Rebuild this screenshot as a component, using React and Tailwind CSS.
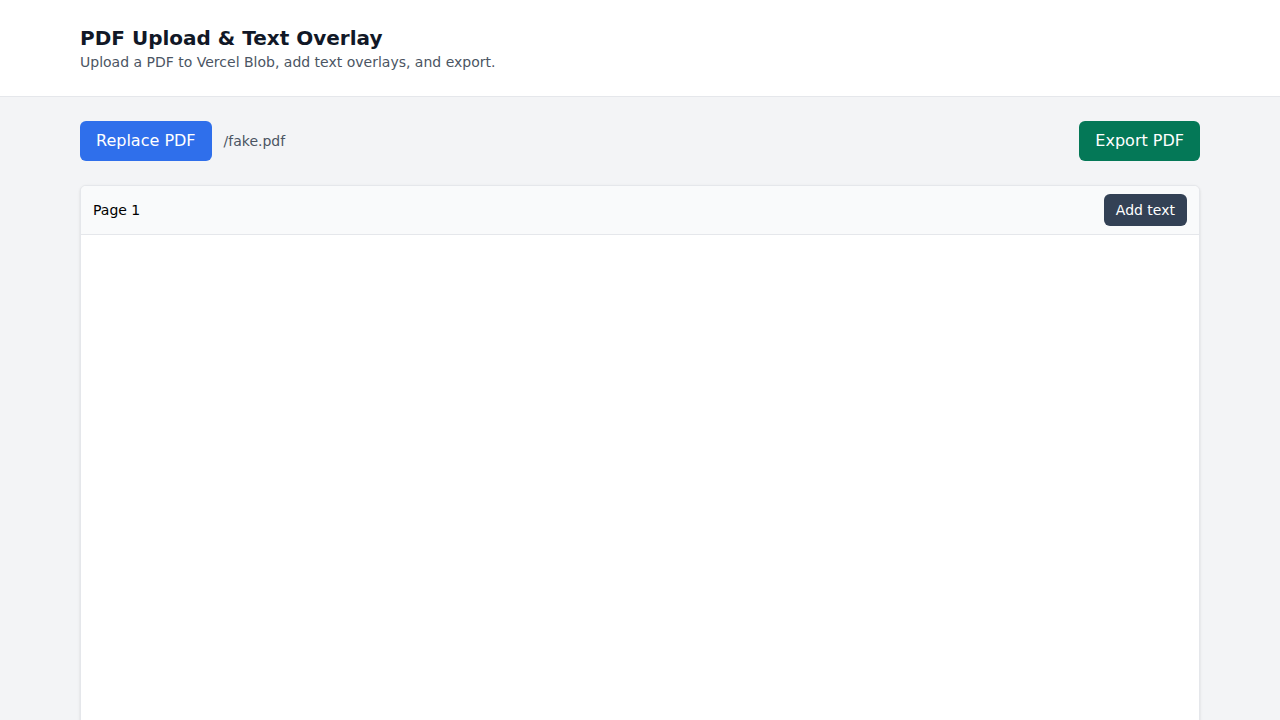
import React from "react";

const App = () => {
  return (
    <div className="min-h-screen bg-[#f3f4f6] font-['DejaVu_Sans',sans-serif] text-gray-900">
      {/* Header */}
      <header className="border-b border-gray-200 bg-white">
        <div className="mx-auto max-w-6xl px-4 py-6">
          <h1 className="text-xl font-bold text-[#111827]">PDF Upload &amp; Text Overlay</h1>
          <p className="text-sm text-[#4b5563]">
            Upload a PDF to Vercel Blob, add text overlays, and export.
          </p>
        </div>
      </header>

      <main className="mx-auto max-w-6xl px-4 py-6">
        {/* Toolbar */}
        <div className="flex items-center justify-between">
          <div className="flex items-center gap-3">
            <button className="rounded-md bg-[#2f6feb] px-4 py-2 text-base text-white">
              Replace PDF
            </button>
            <span className="text-sm text-[#4b5563]">/fake.pdf</span>
          </div>
          <button className="rounded-md bg-[#047857] px-4 py-2 text-base text-white">
            Export PDF
          </button>
        </div>

        {/* Page card */}
        <div className="mt-6 overflow-hidden rounded-md border border-gray-200 bg-white shadow-sm">
          <div className="flex items-center justify-between border-b border-gray-200 bg-[#f9fafb] px-3 py-2">
            <span className="text-sm text-black">Page 1</span>
            <button className="rounded-md bg-[#334155] px-3 py-1.5 text-sm text-white">
              Add text
            </button>
          </div>
          <div className="h-[900px] bg-white"></div>
        </div>
      </main>
    </div>
  );
};

export default App;
